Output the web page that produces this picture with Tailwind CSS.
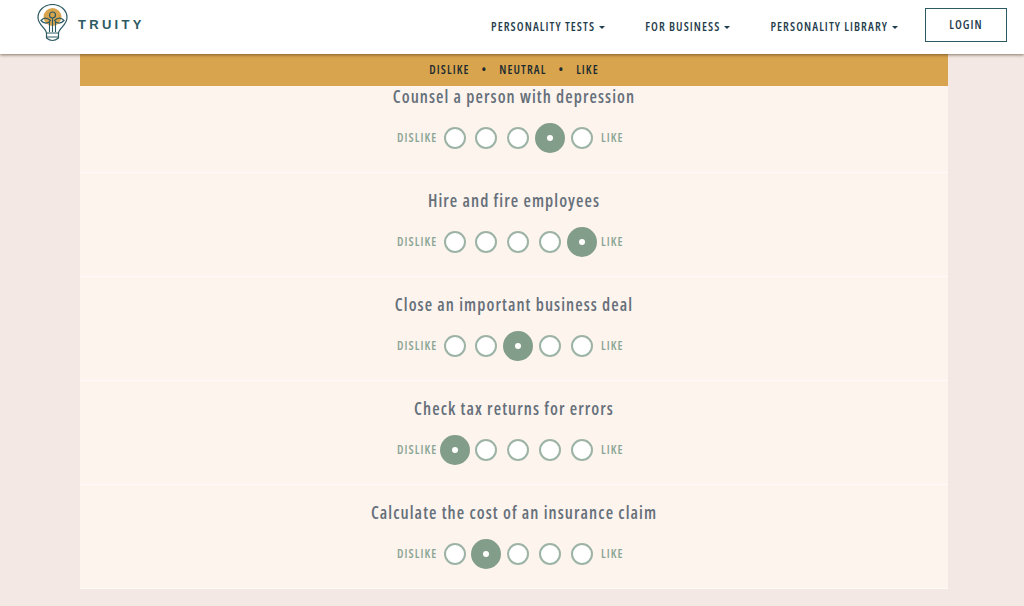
<!DOCTYPE html>
<html><head><meta charset="utf-8"><script src="https://cdn.jsdelivr.net/npm/@tailwindcss/browser@4"></script></head>
<body class="h-[606px] overflow-hidden bg-[#f3e8e3] font-['Open_Sans',sans-serif] font-stretch-[75%]">
<header class="relative z-10 flex h-[54px] items-center justify-between bg-white pl-[37px] pr-[17px] shadow-[0_1px_3px_rgba(60,40,20,0.6)]">
  <div class="flex items-center gap-[9px] pb-[7px]">
    <svg width="32" height="39" viewBox="0 0 32 39" fill="none" stroke="#2c5a63" stroke-width="1.2">
      <circle cx="15.5" cy="13" r="9" fill="#d8a54e" stroke="none"/>
      <path d="M9.5 29 C9 24 1 21 1 13.5 a14.5 13 0 0 1 29 0 C30 21 22 24 21.5 29 Z"/>
      <path d="M9.5 29 v5 q6 5 12 0 v-5 M9.5 33 h12"/>
      <path d="M12.5 28 V18 M15.5 28 V14 M18.5 28 V18" stroke-width="1.1"/>
      <circle cx="15.5" cy="11" r="3"/>
      <path d="M13.5 16.5 C10 13 6.5 13.5 4 16.5 C7 20 11 20 13.5 16.5 Z M17.5 16.5 C21 13 24.5 13.5 27 16.5 C24 20 20 20 17.5 16.5 Z"/>
    </svg>
    <span class="pt-[3px] font-['Liberation_Sans',sans-serif] text-[13px] font-bold tracking-[3.3px] text-[#2c5a63]">TRUITY</span>
  </div>
  <nav class="flex items-center pb-[4px] text-[12px] font-semibold tracking-[0.09em] text-[#1f3d4d]">
    <a class="mr-[40px] flex items-center gap-[4px] pt-[4px]">PERSONALITY TESTS<span class="h-0 w-0 border-x-[3px] border-t-[3px] border-x-transparent border-t-[#1f3d4d]"></span></a>
    <a class="mr-[40px] flex items-center gap-[4px] pt-[4px]">FOR BUSINESS<span class="h-0 w-0 border-x-[3px] border-t-[3px] border-x-transparent border-t-[#1f3d4d]"></span></a>
    <a class="mr-[27px] flex items-center gap-[4px] pt-[4px]">PERSONALITY LIBRARY<span class="h-0 w-0 border-x-[3px] border-t-[3px] border-x-transparent border-t-[#1f3d4d]"></span></a>
    <a class="flex h-[34px] w-[82px] items-center justify-center border border-[#2c5a63]">LOGIN</a>
  </nav>
</header>
<main class="mx-[80px] w-[868px]">
  <div class="flex h-[32px] items-center justify-center gap-[12px] bg-[#d8a54e] text-[12px] font-semibold tracking-[0.09em] text-[#1d2b30]">
    <span>DISLIKE</span><span>•</span><span>NEUTRAL</span><span>•</span><span>LIKE</span>
  </div>

  <section class="flex h-[87px] flex-col items-center border-b border-[#fffaf7] bg-[#fdf4ee]">
    <h2 class="mt-[-1px] h-[24px] text-[17px] leading-[24px] font-semibold tracking-[1.07px] text-[#66707a]">Counsel a person with depression</h2>
    <div class="mt-[18px] flex items-center">
      <span class="w-[47px] whitespace-nowrap pr-[7px] text-right text-[12px] font-semibold tracking-[0.09em] text-[#8aa595]">DISLIKE</span>
      <div class="flex items-center gap-[10px]">
        <span class="mr-[-1px] h-[22px] w-[22px] rounded-full border-2 border-[#9db3a6] bg-white"></span>
        <span class="h-[22px] w-[22px] rounded-full border-2 border-[#9db3a6] bg-white"></span>
        <span class="h-[22px] w-[22px] rounded-full border-2 border-[#9db3a6] bg-white"></span>
        <span class="flex h-[22px] w-[22px] items-center justify-center"><span class="flex h-[30px] w-[30px] shrink-0 items-center justify-center rounded-full bg-[#839d8b]"><span class="h-[6px] w-[6px] rounded-full bg-white"></span></span></span>
        <span class="h-[22px] w-[22px] rounded-full border-2 border-[#9db3a6] bg-white"></span>
      </div>
      <span class="w-[38px] whitespace-nowrap pl-[8px] text-[12px] font-semibold tracking-[0.09em] text-[#8aa595]">LIKE</span>
    </div>
  </section>

  <section class="flex h-[104px] flex-col items-center border-b border-[#fffaf7] bg-[#fdf4ee] pt-[16px]">
    <h2 class="h-[24px] text-[17px] leading-[24px] font-semibold tracking-[1.07px] text-[#66707a]">Hire and fire employees</h2>
    <div class="mt-[18px] flex items-center">
      <span class="w-[47px] whitespace-nowrap pr-[7px] text-right text-[12px] font-semibold tracking-[0.09em] text-[#8aa595]">DISLIKE</span>
      <div class="flex items-center gap-[10px]">
        <span class="mr-[-1px] h-[22px] w-[22px] rounded-full border-2 border-[#9db3a6] bg-white"></span>
        <span class="h-[22px] w-[22px] rounded-full border-2 border-[#9db3a6] bg-white"></span>
        <span class="h-[22px] w-[22px] rounded-full border-2 border-[#9db3a6] bg-white"></span>
        <span class="h-[22px] w-[22px] rounded-full border-2 border-[#9db3a6] bg-white"></span>
        <span class="flex h-[22px] w-[22px] items-center justify-center"><span class="flex h-[30px] w-[30px] shrink-0 items-center justify-center rounded-full bg-[#839d8b]"><span class="h-[6px] w-[6px] rounded-full bg-white"></span></span></span>
      </div>
      <span class="w-[38px] whitespace-nowrap pl-[8px] text-[12px] font-semibold tracking-[0.09em] text-[#8aa595]">LIKE</span>
    </div>
  </section>

  <section class="flex h-[104px] flex-col items-center border-b border-[#fffaf7] bg-[#fdf4ee] pt-[16px]">
    <h2 class="h-[24px] text-[17px] leading-[24px] font-semibold tracking-[1.07px] text-[#66707a]">Close an important business deal</h2>
    <div class="mt-[18px] flex items-center">
      <span class="w-[47px] whitespace-nowrap pr-[7px] text-right text-[12px] font-semibold tracking-[0.09em] text-[#8aa595]">DISLIKE</span>
      <div class="flex items-center gap-[10px]">
        <span class="mr-[-1px] h-[22px] w-[22px] rounded-full border-2 border-[#9db3a6] bg-white"></span>
        <span class="h-[22px] w-[22px] rounded-full border-2 border-[#9db3a6] bg-white"></span>
        <span class="flex h-[22px] w-[22px] items-center justify-center"><span class="flex h-[30px] w-[30px] shrink-0 items-center justify-center rounded-full bg-[#839d8b]"><span class="h-[6px] w-[6px] rounded-full bg-white"></span></span></span>
        <span class="h-[22px] w-[22px] rounded-full border-2 border-[#9db3a6] bg-white"></span>
        <span class="h-[22px] w-[22px] rounded-full border-2 border-[#9db3a6] bg-white"></span>
      </div>
      <span class="w-[38px] whitespace-nowrap pl-[8px] text-[12px] font-semibold tracking-[0.09em] text-[#8aa595]">LIKE</span>
    </div>
  </section>

  <section class="flex h-[104px] flex-col items-center border-b border-[#fffaf7] bg-[#fdf4ee] pt-[16px]">
    <h2 class="h-[24px] text-[17px] leading-[24px] font-semibold tracking-[1.07px] text-[#66707a]">Check tax returns for errors</h2>
    <div class="mt-[18px] flex items-center">
      <span class="w-[47px] whitespace-nowrap pr-[7px] text-right text-[12px] font-semibold tracking-[0.09em] text-[#8aa595]">DISLIKE</span>
      <div class="flex items-center gap-[10px]">
        <span class="mr-[-1px] flex h-[22px] w-[22px] items-center justify-center"><span class="flex h-[30px] w-[30px] shrink-0 items-center justify-center rounded-full bg-[#839d8b]"><span class="h-[6px] w-[6px] rounded-full bg-white"></span></span></span>
        <span class="h-[22px] w-[22px] rounded-full border-2 border-[#9db3a6] bg-white"></span>
        <span class="h-[22px] w-[22px] rounded-full border-2 border-[#9db3a6] bg-white"></span>
        <span class="h-[22px] w-[22px] rounded-full border-2 border-[#9db3a6] bg-white"></span>
        <span class="h-[22px] w-[22px] rounded-full border-2 border-[#9db3a6] bg-white"></span>
      </div>
      <span class="w-[38px] whitespace-nowrap pl-[8px] text-[12px] font-semibold tracking-[0.09em] text-[#8aa595]">LIKE</span>
    </div>
  </section>

  <section class="flex h-[104px] flex-col items-center border-b border-[#fffaf7] bg-[#fdf4ee] pt-[16px]">
    <h2 class="h-[24px] text-[17px] leading-[24px] font-semibold tracking-[1.07px] text-[#66707a]">Calculate the cost of an insurance claim</h2>
    <div class="mt-[18px] flex items-center">
      <span class="w-[47px] whitespace-nowrap pr-[7px] text-right text-[12px] font-semibold tracking-[0.09em] text-[#8aa595]">DISLIKE</span>
      <div class="flex items-center gap-[10px]">
        <span class="mr-[-1px] h-[22px] w-[22px] rounded-full border-2 border-[#9db3a6] bg-white"></span>
        <span class="flex h-[22px] w-[22px] items-center justify-center"><span class="flex h-[30px] w-[30px] shrink-0 items-center justify-center rounded-full bg-[#839d8b]"><span class="h-[6px] w-[6px] rounded-full bg-white"></span></span></span>
        <span class="h-[22px] w-[22px] rounded-full border-2 border-[#9db3a6] bg-white"></span>
        <span class="h-[22px] w-[22px] rounded-full border-2 border-[#9db3a6] bg-white"></span>
        <span class="h-[22px] w-[22px] rounded-full border-2 border-[#9db3a6] bg-white"></span>
      </div>
      <span class="w-[38px] whitespace-nowrap pl-[8px] text-[12px] font-semibold tracking-[0.09em] text-[#8aa595]">LIKE</span>
    </div>
  </section>
</main>
</body></html>
